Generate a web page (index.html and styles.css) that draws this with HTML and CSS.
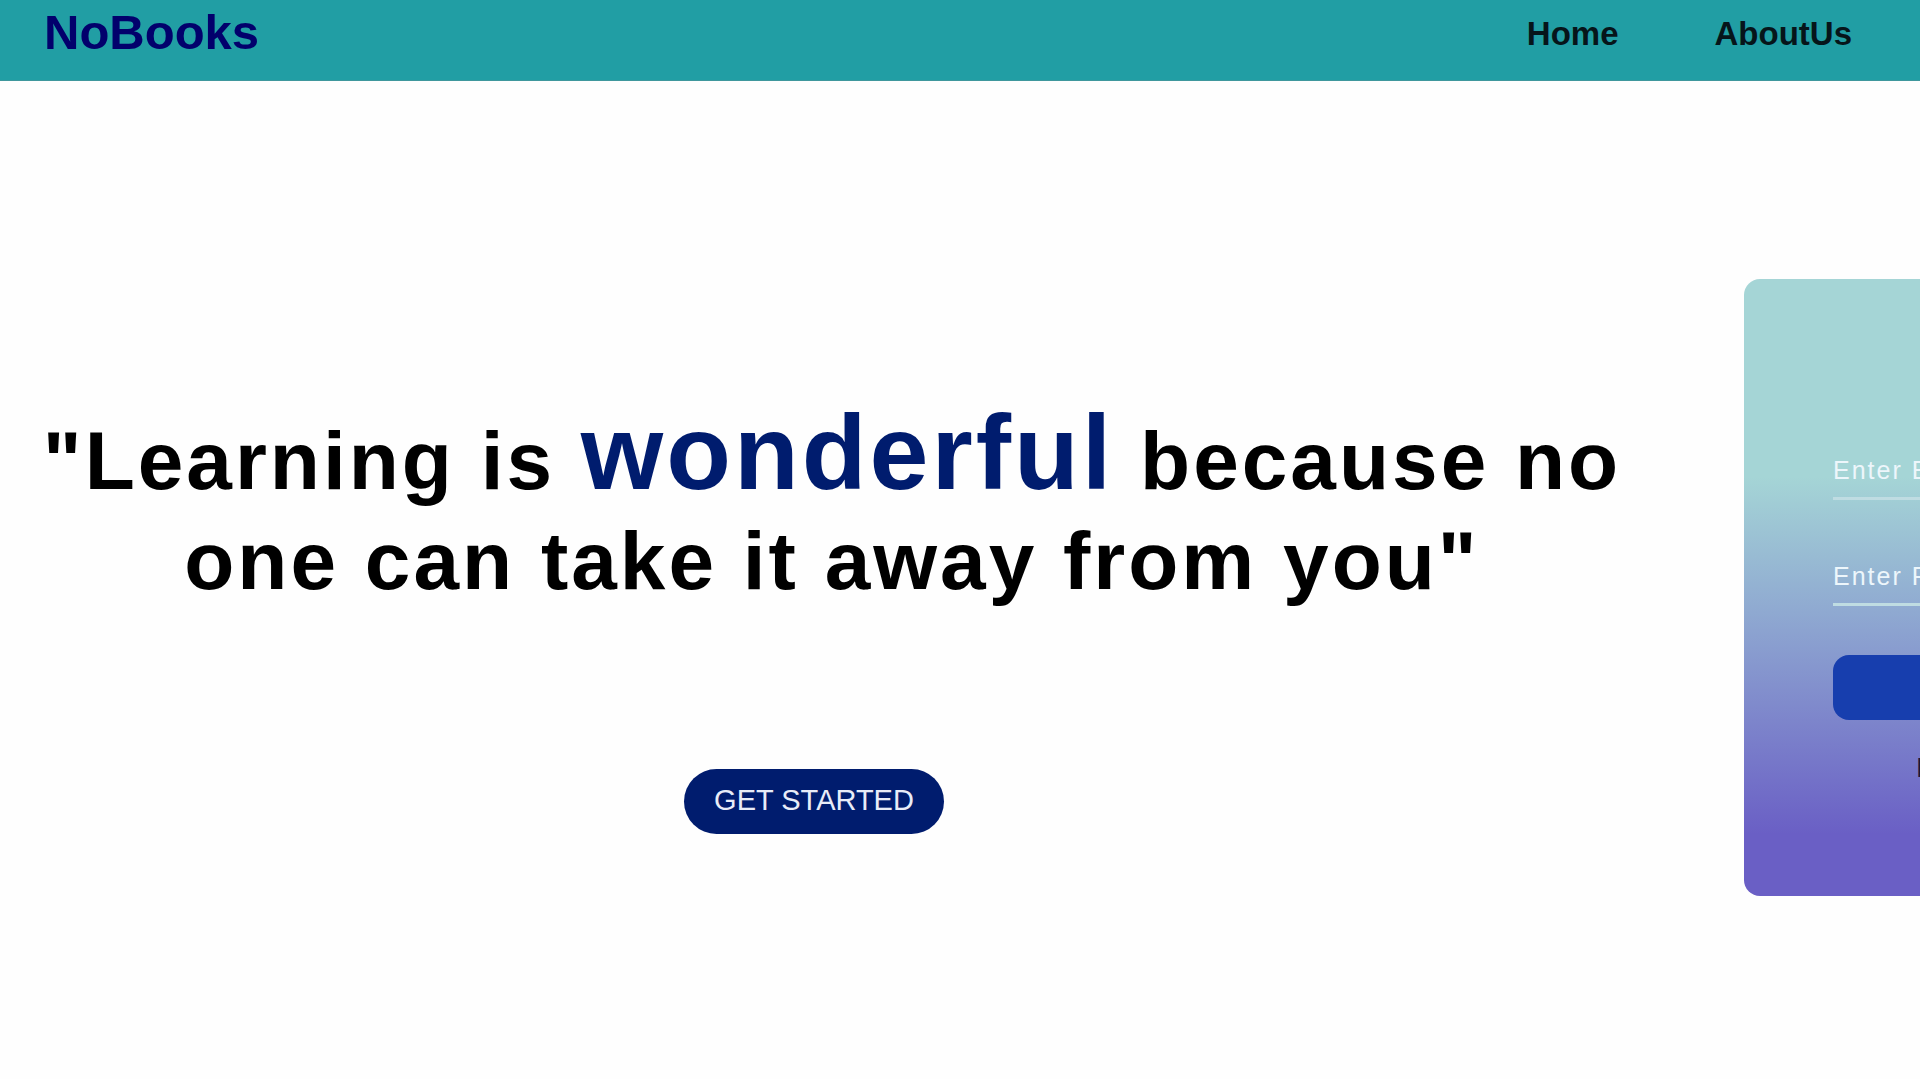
FILE: index.html
```html
<!DOCTYPE html>
<html lang="en">
<head>
  <meta charset="utf-8">
  <meta name="viewport" content="width=device-width, initial-scale=1">
  <title>NoBooks</title>
  <link rel="stylesheet" href="styles.css">
</head>
<body>
  <header class="site-header">
    <a class="logo" href="#">NoBooks</a>
    <nav class="site-nav">
      <a href="#">Home</a>
      <a href="#about">AboutUs</a>
    </nav>
  </header>
  <main class="page">
    <section class="hero">
      <h1 class="quote">"Learning is <span class="quote-accent">wonderful</span> because no one can take it away from you"</h1>
      <div class="hero-action">
        <button class="start-button" type="button">GET STARTED</button>
      </div>
    </section>
    <form class="login-card">
      <input class="field" type="email" placeholder="Enter Email" aria-label="Email">
      <input class="field" type="password" placeholder="Enter Password" aria-label="Password">
      <button class="login-button" type="submit">Login</button>
      <p class="signup">Don't have an account? Sign up</p>
    </form>
  </main>
</body>
</html>
```
FILE: styles.css
```css
* {
  box-sizing: border-box;
}

body {
  margin: 0;
  overflow-x: hidden;
  background: #fefefe;
  color: #000;
  font-family: Arial, "Liberation Sans", sans-serif;
}

.site-header {
  display: flex;
  justify-content: space-between;
  align-items: flex-end;
  padding: 4px 68px 20px 44px;
  background: #219ea4;
  border-bottom: 1px solid #3f979d;
  font-weight: bold;
}

.site-header a {
  text-decoration: none;
}

.logo {
  color: #02006c;
  font-size: 49px;
  line-height: 56px;
}

.site-nav {
  display: flex;
  gap: 96px;
  padding-bottom: 8px;
  font-size: 33px;
  line-height: 36px;
}

.site-nav a {
  color: #06151a;
}

/* The card is wider than its column and runs past the window edge. */
.page {
  display: grid;
  grid-template-columns: minmax(0, 1fr) 176px;
  column-gap: 80px;
  align-items: start;
  padding-top: 198px;
}

.hero {
  padding-top: 123px;
  text-align: center;
}

.quote {
  margin: 0;
  padding: 0 40px;
  font-size: 82px;
  line-height: 100px;
  letter-spacing: 3px;
}

.quote-accent {
  color: #001c6e;
  font-size: 106px;
}

.hero-action {
  padding: 158px 36px 0 0;
}

.start-button {
  padding: 0 30px 2px;
  border: 0;
  border-radius: 33px;
  background: #001c6e;
  color: #e8ecf8;
  font: 29px/63px Arial, "Liberation Sans", sans-serif;
}

.login-card {
  display: flex;
  flex-direction: column;
  width: 770px;
  padding: 168px 89px 112px;
  border-radius: 16px;
  background: linear-gradient(#a5d5d6 32%, #8fa9d1 54%, #6a5fc5 90%);
}

.field {
  height: 53px;
  margin-bottom: 53px;
  padding: 0 0 4px;
  border: 0;
  border-bottom: 3px solid #bfdce2;
  background: transparent;
  color: #fff;
  font: 25px/30px Arial, "Liberation Sans", sans-serif;
  letter-spacing: 2px;
}

.field::placeholder {
  color: #edf6fb;
  opacity: 1;
}

.login-button {
  height: 65px;
  margin-top: -4px;
  border: 0;
  border-radius: 16px;
  background: #173eae;
  color: #fff;
  font: bold 28px/32px Arial, "Liberation Sans", sans-serif;
}

.signup {
  margin: 32px 0 0;
  color: #1c1438;
  font-size: 28px;
  line-height: 32px;
  font-weight: bold;
  text-align: center;
}
```
